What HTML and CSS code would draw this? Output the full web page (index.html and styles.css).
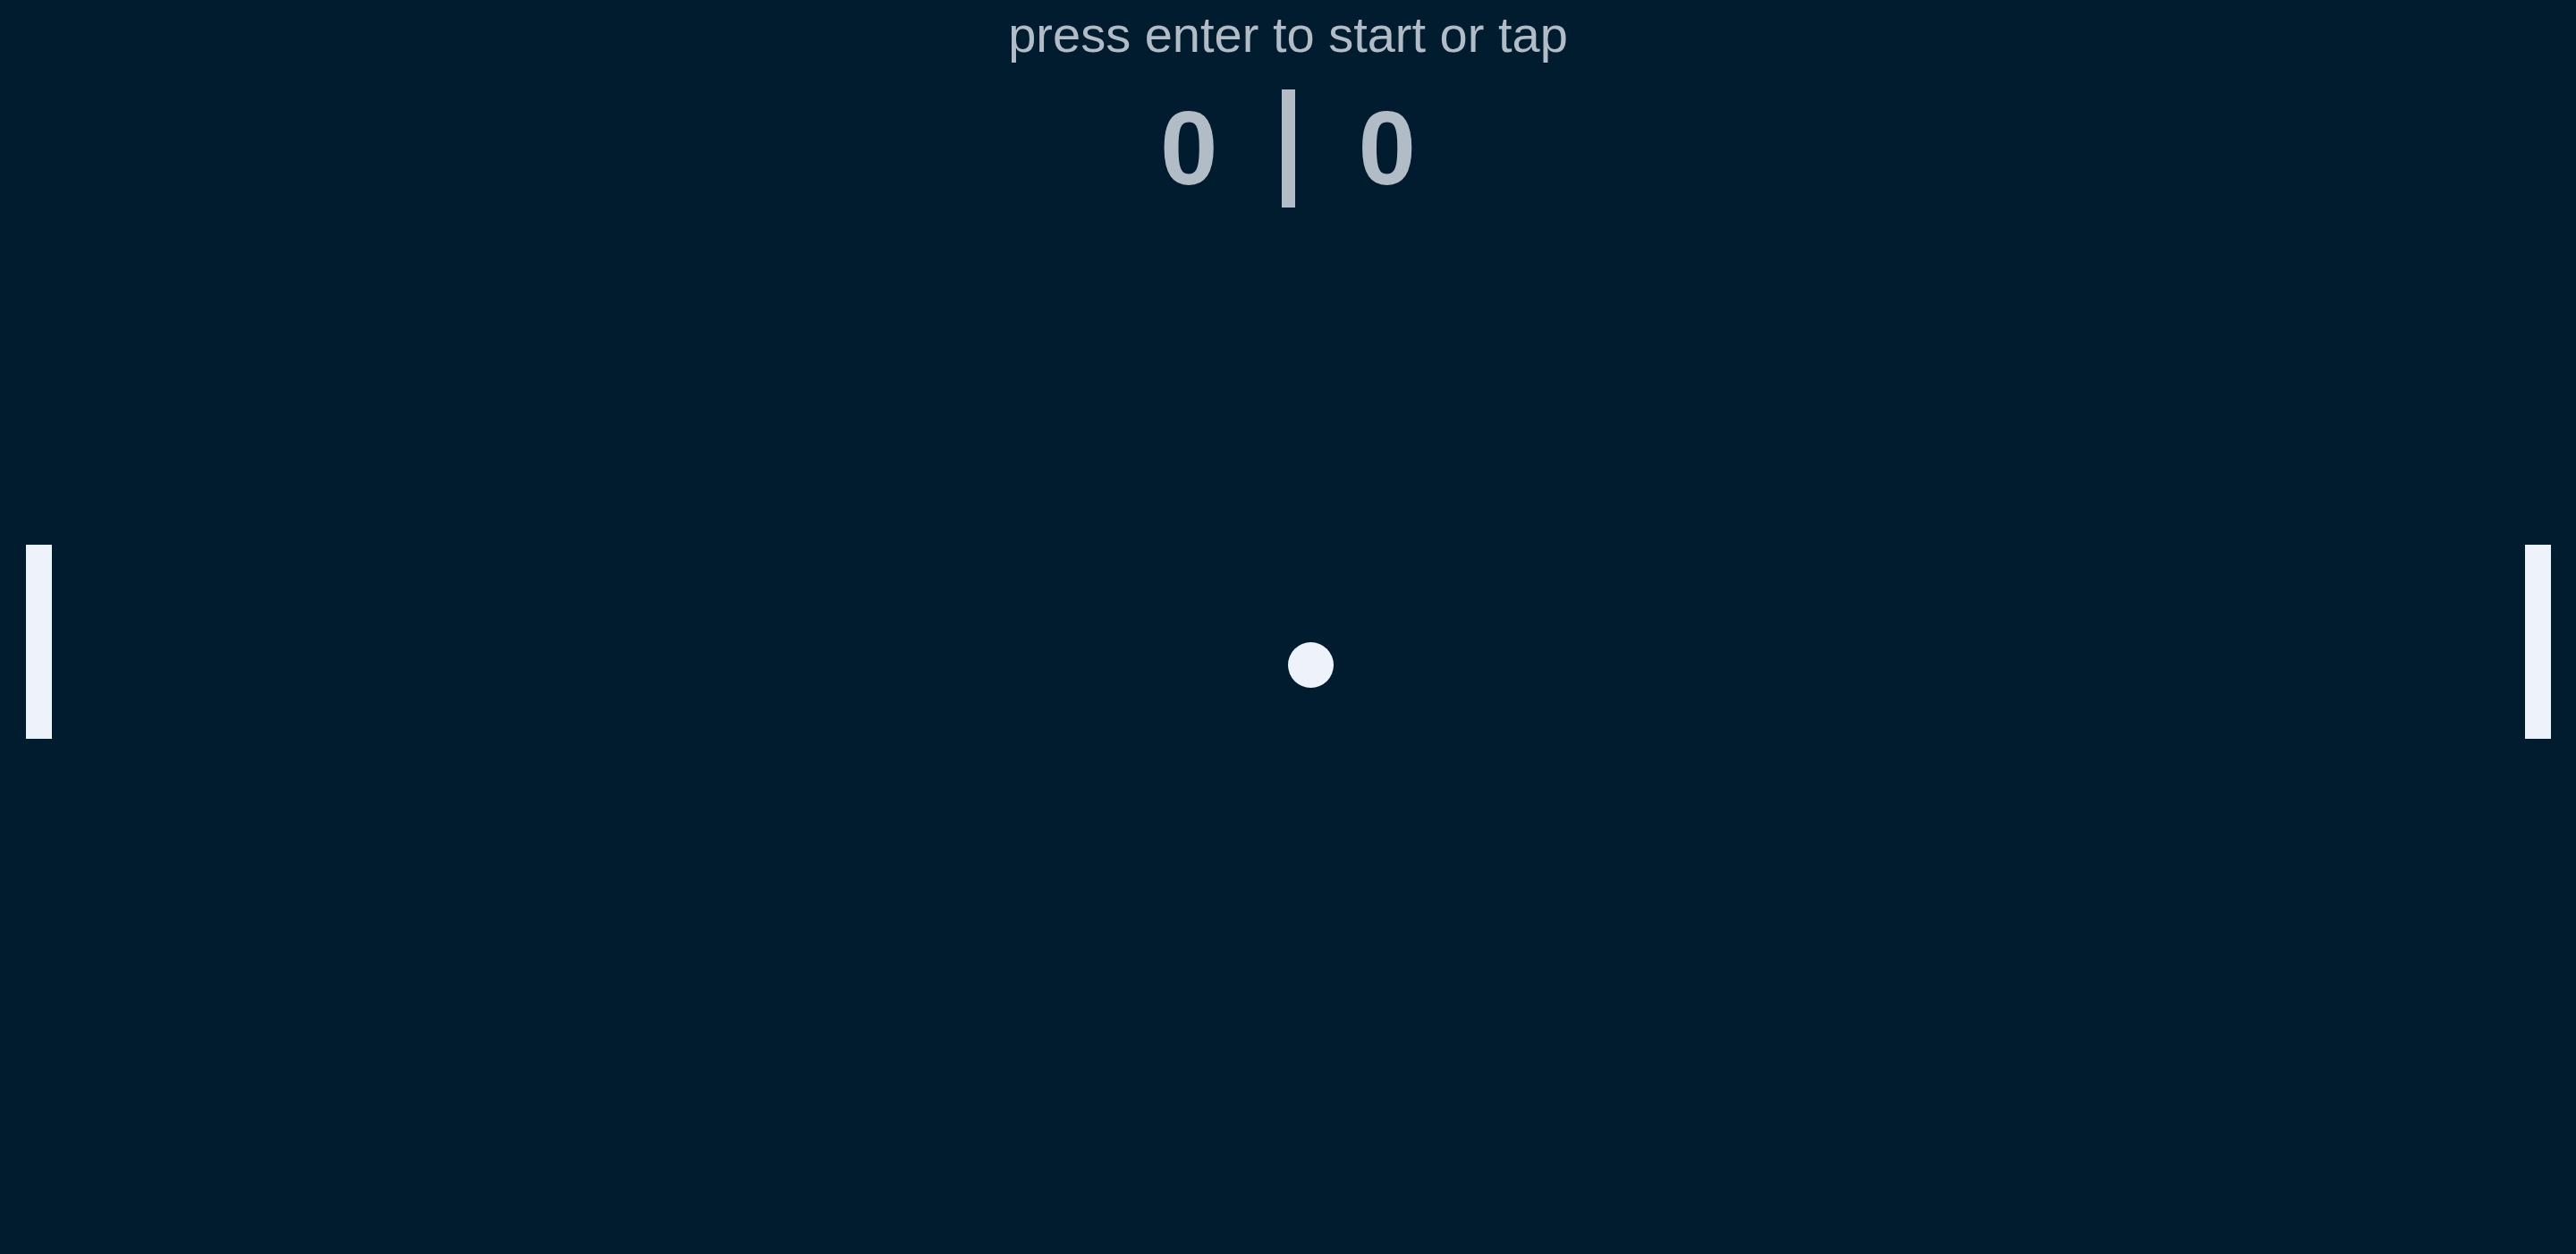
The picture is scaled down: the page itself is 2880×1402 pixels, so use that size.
FILE: index.html
```html
<!DOCTYPE html>
<html lang="en">
<head>
<meta charset="utf-8">
<title>Pong</title>
<link rel="stylesheet" href="styles.css">
</head>
<body>
<main class="court">
  <header class="hud">
    <p class="hint">press enter to start or tap</p>
    <div class="score">
      <span class="points">0</span>
      <span class="divider" aria-hidden="true"></span>
      <span class="points">0</span>
    </div>
  </header>
  <div class="paddle paddle-left"></div>
  <div class="paddle paddle-right"></div>
  <div class="ball"></div>
</main>
</body>
</html>
```

FILE: styles.css
```css
html, body {
  margin: 0;
  padding: 0;
  background: #011b2f;
  height: 100%;
  overflow: hidden;
}

.court {
  position: relative;
  height: 100vh;
  font-family: "Liberation Sans", Arial, sans-serif;
  color: #b2bcc7;
}

.hud {
  display: flex;
  flex-direction: column;
  align-items: center;
  padding-top: 7px;
}

.hint {
  margin: 0;
  font-size: 56px;
  line-height: 1.15;
}

.score {
  display: flex;
  align-items: flex-start;
  gap: 71px;
  margin-top: 29px;
  font-size: 116px;
  font-weight: bold;
  line-height: 1.15;
}

.divider {
  width: 15px;
  height: 132px;
  background: #b2bcc7;
}

.paddle {
  position: absolute;
  top: 609px;
  width: 29px;
  height: 217px;
  background: #eef3fb;
}

.paddle-left {
  left: 29px;
}

.paddle-right {
  right: 28px;
}

.ball {
  position: absolute;
  left: 1440px;
  top: 718px;
  width: 51px;
  height: 51px;
  border-radius: 50%;
  background: #eef3fb;
}
```
